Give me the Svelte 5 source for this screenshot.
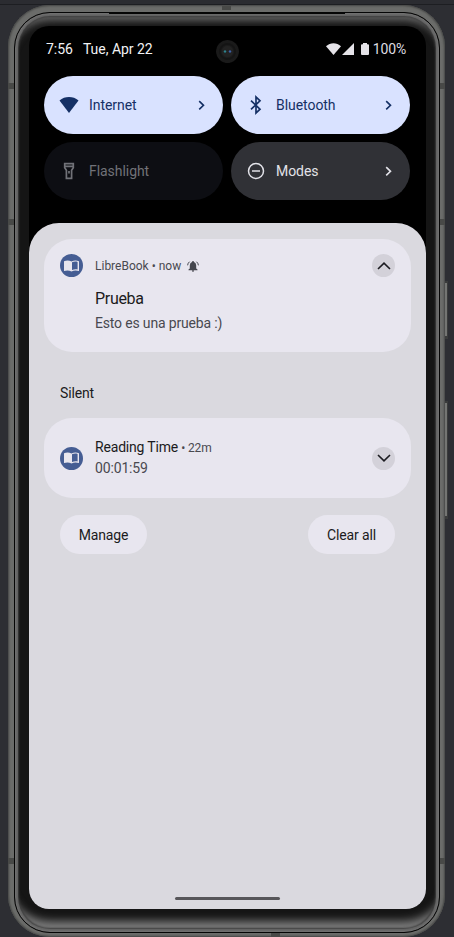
<script>
  const tiles = [
    { name: 'Internet', icon: 'wifi', tone: 'active', arrow: true },
    { name: 'Bluetooth', icon: 'bluetooth', tone: 'active', arrow: true },
    { name: 'Flashlight', icon: 'flashlight', tone: 'disabled', arrow: false },
    { name: 'Modes', icon: 'modes', tone: 'idle', arrow: true }
  ];
</script>

{#snippet book()}
  <span class="app-icon">
    <svg width="15" height="12" viewBox="0 0 15 12">
      <path d="M0 1.2C2.5.2 5.2.2 7.5 1.5C9.8.2 12.5.2 15 1.2V11C12.5 10.1 9.8 10.1 7.5 11.5C5.2 10.1 2.5 10.1 0 11Z" fill="#e8e6ee" />
      <path d="M8 2.3C9.7 1.5 11.7 1.4 13.6 1.9V9.4C11.7 9 9.8 9.2 8 10Z" fill="#455d93" />
    </svg>
  </span>
{/snippet}

<div class="desk">
  <i class="key power"></i>
  <i class="key volume"></i>
  <div class="frame">
    <i class="band tl"></i><i class="band tr"></i><i class="band ml"></i><i class="band mr"></i><i class="band bl"></i><i class="band br"></i>
    <i class="cap"></i><i class="foot"></i>
    <div class="rim">
      <i class="speaker"></i>
      <div class="screen">
        <i class="camera"></i>
        <header>
          <span class="clock">7:56</span><span class="date">Tue, Apr 22</span>
          <svg class="wifi" width="15" height="12" viewBox="0 0 15 12"><path d="M0 3.2C4.4-.9 10.6-.9 15 3.2L7.5 12Z" fill="#e5e3e8" /></svg>
          <svg class="signal" width="12" height="12" viewBox="0 0 12 12"><path d="M12 0V12H0Z" fill="#e5e3e8" /></svg>
          <svg class="battery" width="8" height="12" viewBox="0 0 8 12"><path d="M2 0H6V1.2H7Q8 1.2 8 2.2V11Q8 12 7 12H1Q0 12 0 11V2.2Q0 1.2 1 1.2H2Z" fill="#e5e3e8" /></svg>
          <span class="percent">100%</span>
        </header>
        <div class="tiles">
          {#each tiles as tile}
            <div class="tile {tile.tone}">
              <svg class="glyph" width="20" height="20" viewBox="0 0 20 20">
                {#if tile.icon === 'wifi'}
                  <path d="M.5 5.4C5.8.8 14.2.8 19.5 5.4L10 18Z" fill="currentColor" />
                {:else if tile.icon === 'bluetooth'}
                  <path d="M5 5.6L14 14.2L10 18V2L14 5.8L5 14.4" fill="none" stroke="currentColor" stroke-width="1.7" />
                {:else if tile.icon === 'flashlight'}
                  <path d="M5.7 2.7H14.3V6.8L12.6 9.3V17.3H7.4V9.3L5.7 6.8ZM5.7 5.3H14.3M10 10V12.6" fill="none" stroke="currentColor" stroke-width="1.7" />
                {:else}
                  <g fill="none" stroke="currentColor" stroke-width="1.5"><circle cx="10" cy="10" r="7.5" /><path d="M6 10H14" /></g>
                {/if}
              </svg>
              <span class="name">{tile.name}</span>
              {#if tile.arrow}
                <svg width="7" height="11" viewBox="0 0 7 11"><path d="M1.2 1.2L5.5 5.3L1.2 9.4" fill="none" stroke="currentColor" stroke-width="1.6" /></svg>
              {/if}
            </div>
          {/each}
        </div>
        <main>
          <article class="alert">
            {@render book()}
            <div class="body">
              <div class="meta">LibreBook • now
                <svg width="12" height="11" viewBox="0 0 12 11"><path d="M6 0Q7 0 7 1Q9.2 1.7 9.2 4.5V7.4L10.5 8.5V9.2H1.5V8.5L2.8 7.4V4.5Q2.8 1.7 5 1Q5 0 6 0ZM4.9 9.6H7.1Q7.1 10.8 6 10.8Q4.9 10.8 4.9 9.6Z" fill="#44464d" /><path d="M2.6.7Q.8 2 .6 4.3M9.4.7Q11.2 2 11.4 4.3" fill="none" stroke="#44464d" /></svg>
              </div>
              <div class="title">Prueba</div>
              <div class="text">Esto es una prueba :)</div>
            </div>
            <span class="toggle"><svg width="14" height="8" viewBox="0 0 14 8"><path d="M1 7L7 1.2L13 7" fill="none" stroke="#1b1b20" stroke-width="1.6" /></svg></span>
          </article>
          <h2>Silent</h2>
          <article class="quiet">
            {@render book()}
            <div class="body">
              <div class="reading">Reading Time <small>• 22m</small></div>
              <div class="elapsed">00:01:59</div>
            </div>
            <span class="toggle"><svg width="14" height="8" viewBox="0 0 14 8"><path d="M1 1L7 6.8L13 1" fill="none" stroke="#1b1b20" stroke-width="1.6" /></svg></span>
          </article>
          <div class="actions"><button>Manage</button><button>Clear all</button></div>
          <div class="home"></div>
        </main>
      </div>
    </div>
  </div>
</div>

<style>
  :global(body) { margin: 0; }
  * { box-sizing: border-box; }
  svg { display: block; flex: none; }
  .desk { position: relative; width: 454px; height: 937px; overflow: hidden; padding: 5px 9px 0 8px; background: linear-gradient(#2b2c31 4px, #1d1e22 4px, #1d1e22 5px, #2d2e33 5px); font-family: Roboto, sans-serif; }
  .frame { position: relative; height: 932px; padding: 7px 5px 4px 6px; border-radius: 42px; background: #6b6c6a; box-shadow: inset 0 0 2px 1px #454644; }
  .rim { position: relative; height: 921px; padding: 13px 13px 22px 14px; border: 1px solid #050505; border-radius: 36px; background: #151515; box-shadow: inset 0 0 1px 1px #707070, inset 0 0 1px 3px #686868, inset 0 0 2px 4px #383838, inset 0 13px 9px -6px #707070, inset 0 -18px 9px -7px #7c7c7c; }
  .screen { position: relative; height: 883px; display: flex; flex-direction: column; background: #000; border-radius: 20px; overflow: hidden; }
  .band { position: absolute; background: #484947; }
  .tl, .tr, .ml, .mr, .bl, .br { width: 6px; height: 6px; }
  .tl, .ml, .bl { left: 0; }
  .tr, .mr, .br { right: 0; }
  .tl, .tr { top: 78px; }
  .ml, .mr { top: 214px; }
  .bl, .br { top: 853px; }
  .cap, .foot { position: absolute; width: 9px; height: 4px; background: #484947; }
  .cap { left: 214px; top: 1px; }
  .foot { left: 263px; bottom: 0; }
  .speaker { position: absolute; left: 94px; right: 94px; top: 0; height: 1px; background: #050505; }
  .key { position: absolute; left: 444px; width: 4px; background: #747573; border: 1px solid #3a3b3b; border-width: 2px 1px 3px 0; }
  .power { top: 281px; height: 58px; }
  .volume { top: 401px; height: 118px; }
  .camera { position: absolute; left: 187px; top: 14px; width: 23px; height: 23px; border-radius: 50%; background: radial-gradient(circle at 9px 11.5px, #2d8490 0 .5px, transparent 1.8px), radial-gradient(circle at 14px 11.5px, #3c60a8 0 .5px, transparent 1.8px), radial-gradient(circle closest-side, #222 0 5px, #141414 7px 8px, #1a1a1a 9px 11px, #111 11.5px); }
  header { display: flex; align-items: center; height: 50px; padding: 0 20px 4px 17px; color: #f2f2f4; font-size: 14px; letter-spacing: -.02px; }
  .date { margin-left: 10px; }
  .wifi { margin-left: auto; }
  .signal { margin-left: 1px; }
  .battery { margin: 0 4px 0 7px; }
  .percent { color: #dddce0; letter-spacing: -.15px; }
  .tiles { display: grid; grid-template-columns: 179px 179px; gap: 8px; padding: 0 15px 0 15.4px; height: 147px; grid-auto-rows: 58px; }
  .tile { display: flex; align-items: center; padding: 0 18px 0 15px; border-radius: 29px; font-size: 14px; letter-spacing: -.05px; }
  .active { background: #d9e2ff; color: #153065; }
  .disabled { background: #0d0e13; color: #717278; }
  .idle { background: #303136; color: #e2e2e8; }
  .name { flex: 1; margin-left: 9.6px; }
  main { flex: 1; display: flex; flex-direction: column; padding: 16px 15.5px 9px 15px; border-radius: 30px 30px 0 0; background: #dad9df; }
  article { display: flex; border-radius: 28px; background: #e8e6ef; padding: 15px 15.5px 0 16px; }
  .alert { height: 113px; }
  .quiet { height: 80px; align-items: center; padding: 0 15.5px 0 16px; }
  .app-icon, .toggle { display: flex; align-items: center; justify-content: center; flex: none; width: 23px; height: 23px; border-radius: 50%; background: #455d93; }
  .toggle { background: #d3d1d9; }
  .body { flex: 1; margin-left: 12px; color: #494950; }
  .meta { display: flex; align-items: center; gap: 6px; height: 24px; font-size: 12px; letter-spacing: 0; }
  .title { margin-top: 10px; line-height: 22px; font-size: 16px; letter-spacing: -.3px; color: #1b1b20; }
  .text { margin-top: 4px; line-height: 19px; font-size: 14px; letter-spacing: -.17px; }
  h2 { margin: 31px 0 15px 16px; height: 20px; line-height: 21px; font-size: 14px; letter-spacing: -.15px; font-weight: 400; color: #1b1b20; }
  .quiet .body { padding-bottom: 2px; }
  .reading { font-size: 14px; line-height: 20px; letter-spacing: -.18px; color: #1b1b20; }
  small { font-size: 12px; color: #494950; }
  .elapsed { font-size: 14px; line-height: 20px; letter-spacing: -.15px; }
  .actions { display: flex; justify-content: space-between; padding: 17px 15.5px 0 16px; }
  button { width: 87px; height: 39px; padding: 1px 0 0; border: 0; border-radius: 20px; background: #e8e6ef; color: #1b1b20; font: 14px Roboto, sans-serif; letter-spacing: -.12px; }
  .home { width: 105px; height: 3px; margin: auto auto 0; border-radius: 2px; background: #57565a; }
</style>
